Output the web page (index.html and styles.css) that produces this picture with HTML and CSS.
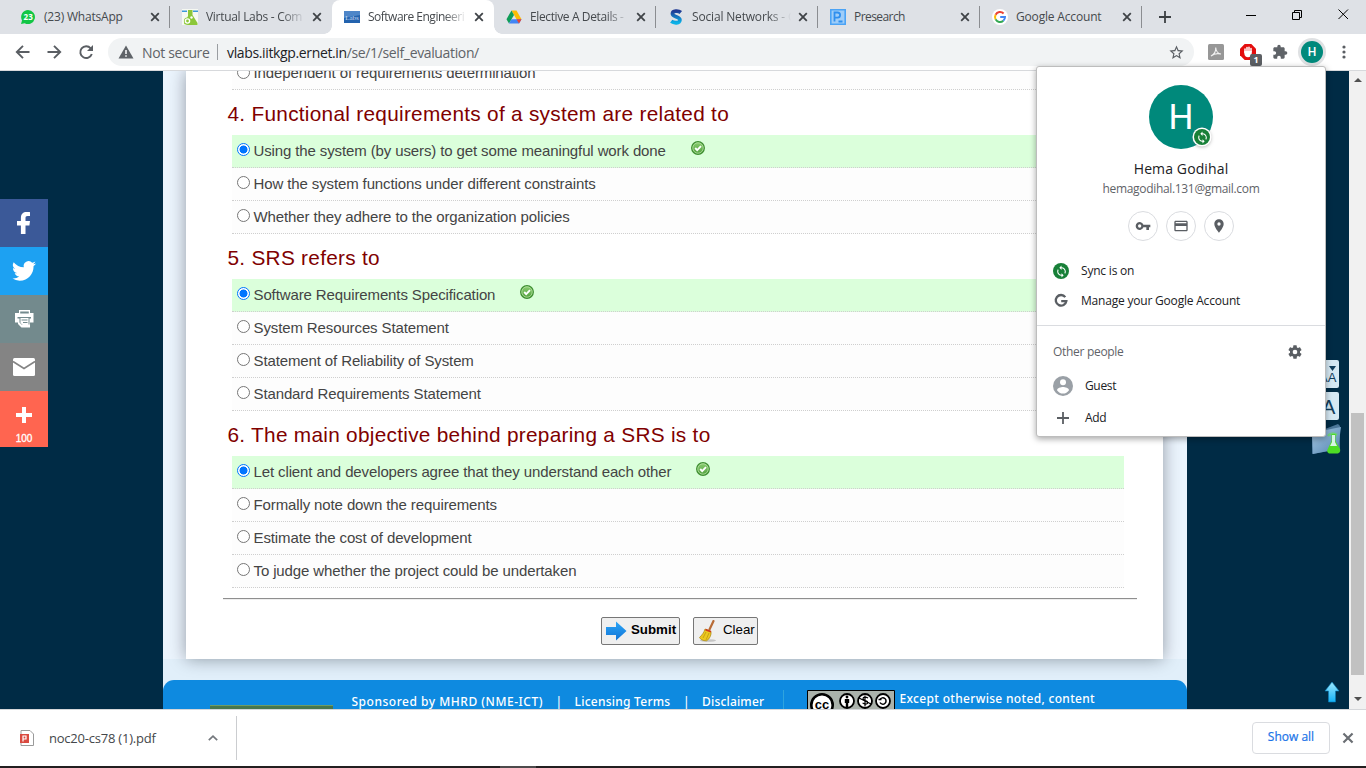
FILE: index.html
```html
<!DOCTYPE html>
<html lang="en">
<head>
<meta charset="utf-8">
<title>Software Engineering Virtual Lab</title>
<link rel="stylesheet" href="styles.css">
</head>
<body>
<svg class="defs" width="0" height="0">
  <defs>
    <linearGradient id="tick-g" x1="0" y1="0" x2="0" y2="1"><stop offset="0" stop-color="#8ccf72"/><stop offset="1" stop-color="#4f9e3c"/></linearGradient>
    <linearGradient id="arrow-g" x1="0" y1="0" x2="0" y2="1"><stop offset="0" stop-color="#2ba6f7"/><stop offset="1" stop-color="#1173d6"/></linearGradient>
    <linearGradient id="up-g" x1="0" y1="0" x2="0" y2="1"><stop offset="0" stop-color="#9fe9ff"/><stop offset="1" stop-color="#12b0f5"/></linearGradient>
    <linearGradient id="folder-g" x1="0" y1="0" x2="1" y2="1"><stop offset="0" stop-color="#a9cbe6"/><stop offset="1" stop-color="#4f81ad"/></linearGradient>
    <linearGradient id="s-g" x1="0" y1="0" x2="0" y2="1"><stop offset="0" stop-color="#203a94"/><stop offset="1" stop-color="#0bb2e8"/></linearGradient>
    <symbol id="x" viewBox="0 0 10 10"><path d="M1.200 1.200l7.600 7.600M8.800 1.200L1.200 8.800" fill="none" stroke="currentColor" stroke-width="1.800"/></symbol>
    <symbol id="sync" viewBox="0 0 24 24"><path fill="currentColor" d="M12 4V1L8 5l4 4V6c3.310 0 6 2.690 6 6 0 1.010-.25 1.970-.7 2.800l1.460 1.460C19.540 15.030 20 13.570 20 12c0-4.420-3.580-8-8-8zm0 14c-3.310 0-6-2.690-6-6 0-1.010.25-1.970.7-2.800L5.240 7.740C4.460 8.970 4 10.430 4 12c0 4.420 3.580 8 8 8v3l4-4-4-4v3z"/></symbol>
    <symbol id="tick" viewBox="0 0 14 14"><circle cx="7" cy="7" r="6.300" fill="url(#tick-g)" stroke="#3f8f32" stroke-width="1.300"/><circle cx="7" cy="7" r="5.200" fill="none" stroke="#b4dfa2" stroke-width=".8"/><path d="M4.200 7l2 2.100 3.800-4" fill="none" stroke="#fff" stroke-width="1.900"/></symbol>
    <symbol id="plus" viewBox="0 0 12 12"><path d="M6 0v12M0 6h12" fill="none" stroke="currentColor" stroke-width="1.800"/></symbol>
  </defs>
</svg>

<div class="tabs">
  <div class="tab">
    <svg class="fav" viewBox="0 0 16 16"><path d="M8 1a7 7 0 1 1-3.300 13.200L1 15l1-3.600A7 7 0 0 1 8 1z" fill="#12c645"/><text x="8.200" y="11" text-anchor="middle" class="fav-count">23</text></svg>
    <span class="title t1">(23) WhatsApp</span><svg class="close"><use href="#x"/></svg>
  </div>
  <div class="tab">
    <svg class="fav" viewBox="0 0 16 16"><path d="M0 0h16v16H0z" fill="#f6f9f2"/><path d="M0 2.200h5M11 2.200h5" stroke="#3b9ad9" stroke-width="1.500"/><path d="M6 1h4.500v5l5 8v2H6l-4-1 4-8z" fill="#8cc739"/><circle cx="5.500" cy="12" r="3.600" fill="#8cc739"/><circle cx="5.500" cy="12" r="2.100" fill="none" stroke="#fff" stroke-width="1.400"/><circle cx="9.500" cy="8.500" r="1.200" fill="#fff"/></svg>
    <span class="title t2 fade">Virtual Labs - Com</span><svg class="close"><use href="#x"/></svg>
  </div>
  <div class="tab active">
    <svg class="fav" viewBox="0 0 16 16"><path d="M0 2h16v12H0z" fill="#2363ae"/><path d="M0 2h16v4L0 9z" fill="#4e86c8"/><text x="8" y="10.500" text-anchor="middle" class="fav-labs">Labs</text></svg>
    <span class="title t3 fade">Software Engineeri</span><svg class="close"><use href="#x"/></svg>
  </div>
  <div class="tab after">
    <svg class="fav" viewBox="0 0 16 16"><path d="M5.500 1.500h5l5 8.800h-5z" fill="#fbbc04"/><path d="M5.500 1.500L8 6 3 14.500.5 10.200z" fill="#0f9d58"/><path d="M5.400 10.300h10.100L13 14.500H3z" fill="#4285f4"/><path d="M10.500 10.300h5L13 14.500z" fill="#ea4335"/></svg>
    <span class="title t4 fade">Elective A Details -</span><svg class="close"><use href="#x"/></svg>
  </div>
  <div class="tab">
    <svg class="fav" viewBox="0 0 16 16"><path d="M12.800 3.500C10.500 1.500 4.300 1.300 4.500 5 4.700 8 12 7.500 11.900 11 11.700 14.600 6 14.300 3.200 12.300" fill="none" stroke="url(#s-g)" stroke-width="3.800"/></svg>
    <span class="title t5 fade">Social Networks - C</span><svg class="close"><use href="#x"/></svg>
  </div>
  <div class="tab">
    <svg class="fav" viewBox="0 0 16 16"><path d="M.8.8h14.400v14.400H.8z" fill="#9fcdf8" stroke="#4ba3f5" stroke-width="1.600"/><path d="M4.500 12.500v-9h3a2.500 2.500 0 0 1 0 5.200h-3M8.500 12.500h4" fill="none" stroke="#2f8fee" stroke-width="1.800"/></svg>
    <span class="title t6">Presearch</span><svg class="close"><use href="#x"/></svg>
  </div>
  <div class="tab">
    <svg class="fav" viewBox="0 0 16 16"><circle cx="8" cy="8" r="8" fill="#fff"/><path d="M11.600 4.500A5 5 0 0 0 3.600 5.700" fill="none" stroke="#ea4335" stroke-width="2"/><path d="M3.600 5.700a5 5 0 0 0 0 4.700" fill="none" stroke="#fbbc05" stroke-width="2"/><path d="M3.600 10.400a5 5 0 0 0 7.700 1.400" fill="none" stroke="#34a853" stroke-width="2"/><path d="M11.300 11.800A5 5 0 0 0 13 8.100H8.200" fill="none" stroke="#4285f4" stroke-width="2"/></svg>
    <span class="title t7">Google Account</span><svg class="close"><use href="#x"/></svg>
  </div>
  <svg class="newtab"><use href="#plus"/></svg>
  <svg class="wincontrols" viewBox="0 0 110 12"><path d="M1 7.500h10" stroke="#000"/><path d="M47.500 4.500h7v7h-7zM49.500 4.500v-2h7v7h-2M93.500 1.500l9.500 9.500M103 1.500L93.500 11" fill="none" stroke="#000"/></svg>
</div>

<div class="toolbar">
  <svg class="nav" viewBox="0 0 80 16"><g fill="none" stroke="#5a5e63" stroke-width="1.900"><path d="M14.500 8H2M8 1.800L1.800 8 8 14.200M32.500 8H45M39 1.800L45.200 8 39 14.200"/><path d="M76.800 10A5.900 5.900 0 1 1 75.700 4.300"/></g><path d="M78 1v6h-6z" fill="#5a5e63"/></svg>
  <div class="omnibox">
    <svg class="warn" viewBox="0 0 16 14"><path d="M8 .5L15.500 13.500H.5z" fill="#5f6368"/><path d="M8 5v4M8 10.200v1.600" stroke="#fff" stroke-width="1.500"/></svg>
    <span class="notsecure">Not secure</span><i class="bar"></i>
    <span class="url"><b>vlabs.iitkgp.ernet.in</b>/se/1/self_evaluation/</span>
    <svg class="star" viewBox="0 0 24 24"><path fill="#5a5e63" d="M22 9.240l-7.190-.62L12 2 9.190 8.630 2 9.240l5.460 4.730L5.820 21 12 17.270 18.180 21l-1.630-7.030L22 9.240zM12 15.400l-3.760 2.270 1-4.280-3.320-2.880 4.380-.38L12 6.100l1.710 4.040 4.380.38-3.320 2.880 1 4.280L12 15.400z"/></svg>
  </div>
  <svg class="ext pdf" viewBox="0 0 16 16"><rect width="16" height="16" rx="1.500" fill="#979797"/><path d="M3 12c3-1.500 5-5 4.700-8.500C8 7 9.500 9.500 13 10 9 9 5.500 10 3 12z" fill="none" stroke="#f2f2f2" stroke-width="1.100"/></svg>
  <div class="ext block">
    <svg viewBox="0 0 16 16"><path d="M4.700 0h6.600L16 4.700v6.600L11.300 16H4.700L0 11.300V4.700z" fill="#e40d0d"/><path d="M5 8.500V5M7 8V3.500M9 8V3.200M11 8V4.500" fill="none" stroke="#fff" stroke-width="1.500" stroke-linecap="round"/><path d="M4.300 7h7.400v2.500C11.500 12 10 13.300 8 13.300S4.300 12 4.300 9z" fill="#fff"/></svg>
    <span class="badge">1</span>
  </div>
  <svg class="ext puzzle" viewBox="0 0 24 24"><path fill="#5f6368" d="M20.500 11H19V7c0-1.100-.9-2-2-2h-4V3.500a2.500 2.500 0 0 0-5 0V5H4c-1.100 0-2 .9-2 2v3.800h1.500c1.500 0 2.700 1.200 2.700 2.700S5 16.200 3.500 16.200H2V20c0 1.100.9 2 2 2h3.800v-1.500c0-1.500 1.200-2.700 2.700-2.700s2.700 1.200 2.700 2.700V22H17c1.100 0 2-.9 2-2v-4h1.500a2.500 2.500 0 0 0 0-5z"/></svg>
  <span class="me">H</span>
  <svg class="dots" viewBox="0 0 4 14"><g fill="#5a5e63"><circle cx="2" cy="2" r="1.600"/><circle cx="2" cy="7" r="1.600"/><circle cx="2" cy="12" r="1.600"/></g></svg>
</div>

<div class="viewport">
  <nav class="share">
    <a class="fb"><svg viewBox="0 0 32 32"><path fill="#fff" d="M22 5.160c-.4-.05-1.800-.16-3.400-.16-3.400 0-5.700 2-5.700 5.900v3.200H9v4.500h3.900V27h4.600v-8.400h3.900l.6-4.500h-4.500v-2.800c0-1.300.4-2.200 2.200-2.200H22z"/></svg></a>
    <a class="tw"><svg viewBox="0 0 32 32"><path fill="#fff" d="M28 8.560a9.900 9.900 0 0 1-2.830.78 4.900 4.900 0 0 0 2.170-2.720 9.900 9.900 0 0 1-3.130 1.190 4.920 4.920 0 0 0-8.400 4.490A13.980 13.980 0 0 1 5.670 7.150a4.930 4.930 0 0 0 1.520 6.570 4.900 4.900 0 0 1-2.230-.61v.06c0 2.390 1.700 4.380 3.950 4.830a4.900 4.900 0 0 1-2.220.08 4.930 4.930 0 0 0 4.600 3.420A9.900 9.900 0 0 1 4.500 23.540 13.940 13.940 0 0 0 11.550 25.760c9.050 0 14-7.500 14-14v-.64A10 10 0 0 0 28 8.560z"/></svg></a>
    <a class="pr"><svg viewBox="0 0 32 32"><path fill="#fff" d="M11 7h11v3h3.500v9.500H22V24.500h-8.500L10 21v-1.500H7V10h4z"/><path fill="#738a8d" d="M12.200 8.400h8.600v2h-8.600zM9.500 14h13.500v1.400h-1.500v6h-8l-2-2v-4h-2z"/><path fill="#fff" d="M12.500 15h8v7.500h-5L12.500 20z"/><path d="M13.500 17h6M15 19.500h4.500" stroke="#738a8d" stroke-width="1.100"/></svg></a>
    <a class="em"><svg viewBox="0 0 32 32"><rect x="5" y="7" width="22" height="18" rx="1.500" fill="#fff"/><path d="M5 10.500l11 7L27 10.500" fill="none" stroke="#848484" stroke-width="1.600"/></svg></a>
    <a class="more"><svg viewBox="0 0 32 32"><path d="M16 8v16M8 16h16" stroke="#fff" stroke-width="4"/></svg><span>100</span></a>
  </nav>

  <main class="page">
    <div class="body"><section class="card">
      <div class="opt first"><i class="radio"></i><span class="o0">Independent of requirements determination</span></div>
      <h2 class="h4q">4. Functional requirements of a system are related to</h2>
      <div class="opt right"><i class="radio on"></i><span>Using the system (by users) to get some meaningful work done</span><svg class="tick"><use href="#tick"/></svg></div>
      <div class="opt"><i class="radio"></i><span>How the system functions under different constraints</span></div>
      <div class="opt"><i class="radio"></i><span>Whether they adhere to the organization policies</span></div>
      <h2 class="h5q">5. SRS refers to</h2>
      <div class="opt right"><i class="radio on"></i><span>Software Requirements Specification</span><svg class="tick"><use href="#tick"/></svg></div>
      <div class="opt"><i class="radio"></i><span>System Resources Statement</span></div>
      <div class="opt"><i class="radio"></i><span>Statement of Reliability of System</span></div>
      <div class="opt"><i class="radio"></i><span>Standard Requirements Statement</span></div>
      <h2 class="h6q">6. The main objective behind preparing a SRS is to</h2>
      <div class="opt right"><i class="radio on"></i><span>Let client and developers agree that they understand each other</span><svg class="tick"><use href="#tick"/></svg></div>
      <div class="opt"><i class="radio"></i><span>Formally note down the requirements</span></div>
      <div class="opt"><i class="radio"></i><span>Estimate the cost of development</span></div>
      <div class="opt"><i class="radio"></i><span>To judge whether the project could be undertaken</span></div>
      <div class="rule"></div>
      <div class="actions">
        <div class="btn submit"><svg viewBox="0 0 22 22"><path d="M1 7h10V1.500L21.500 11 11 20.500V15H1z" fill="url(#arrow-g)"/></svg><b>Submit</b></div>
        <div class="btn clear"><svg viewBox="0 0 22 22"><ellipse cx="11" cy="20.500" rx="8" ry="1.300" fill="#c4c4c4"/><path d="M16.500 1L12.500 9.500" stroke="#b86b35" stroke-width="2.200" stroke-linecap="round"/><path d="M8 9l6 2.500c.5 3-1 7.500-4.500 9.300C6 21 3 19 2.500 17.500 5 15 7 12.500 8 9z" fill="#ecc81e" stroke="#a88512" stroke-width=".7"/><path d="M8.500 9.600l5.500 2.200" stroke="#cf3a1c" stroke-width="1.700"/><path d="M9 12l-3 6M12 13l-3 7" stroke="#b9920c" stroke-width=".7"/></svg><span>Clear</span></div>
      </div>
    </section></div>
    <footer>
      <div class="green"></div>
      <div class="links"><span class="f1">Sponsored by MHRD (NME-ICT)</span><span>|</span><span class="f2">Licensing Terms</span><span>|</span><span class="f3">Disclaimer</span></div>
      <div class="license">
        <svg width="88" height="31" viewBox="0 0 88 31"><path d="M.5.500h87v30H.5z" fill="#aab2ab" stroke="#000"/><circle cx="15" cy="15" r="10.700" fill="#fff" stroke="#000" stroke-width="2.600"/><text x="15" y="18.500" text-anchor="middle" class="cc">cc</text><g fill="#fff" stroke="#000" stroke-width="1.800"><circle cx="40" cy="11" r="7"/><circle cx="58" cy="11" r="7"/><circle cx="76" cy="11" r="7"/></g><circle cx="40" cy="7" r="1.400"/><path d="M37.800 9h4.400v4h-1v4h-2.400v-4h-1z"/><path d="M61 8.200c-1.500-1.500-5-1.500-5 .4 0 2.500 4.800 1.500 4.800 4 0 2-3.500 2-5.200.3M58 5.500v11M52 8l12 6" fill="none" stroke="#000" stroke-width="1.200"/><path d="M73 9.500a3.200 3.200 0 1 1 0 3M71.500 9.500h3" fill="none" stroke="#000" stroke-width="1.500"/></svg>
        <span class="f4">Except otherwise noted, content</span>
      </div>
    </footer>
  </main>

  <div class="tools">
    <svg width="28" height="28" viewBox="0 0 28 28"><rect width="28" height="28" rx="2" fill="#d5e8f3"/><path d="M18 6h7l-3.500 5z" fill="#123e5c"/><text x="8" y="22" class="aa">AA</text></svg>
    <svg width="28" height="28" viewBox="0 0 28 28"><rect width="28" height="28" rx="2" fill="#d5e8f3"/><text x="11" y="22" class="aaa">A</text></svg>
    <svg class="folder" width="32" height="32" viewBox="0 0 32 32"><path d="M2 9l13-3 13-5 2 2v23L2 31z" fill="#4b7699"/><path d="M2 12l14-5 15-3-3 22L3 31z" fill="url(#folder-g)"/><path d="M18 13c2-3 6-3 9-1" fill="none" stroke="#5ff23b" stroke-width="2.500" opacity=".55"/><path d="M21.500 11h4v7l4.500 8c.8 3-1 4.500-3 4.500h-7c-2 0-3.500-2-2.500-4l4-8.500z" fill="#4ddd25"/><path d="M22 12h3v7l2 4h-7l2-4z" fill="#d6f5e3"/></svg>
  </div>
  <svg class="totop" viewBox="0 0 16 22"><path d="M8 1l7 9h-3.500v11h-7V10H1z" fill="url(#up-g)" stroke="#087db8" stroke-width=".6"/></svg>
  <div class="scroll"><svg viewBox="0 0 8 4"><path d="M0 4l4-4 4 4z" fill="#505050"/></svg><i></i><svg viewBox="0 0 8 4"><path d="M0 0h8L4 4z" fill="#505050"/></svg></div>
</div>

<div class="downloads">
  <svg class="pdficon" viewBox="0 0 14 16"><path d="M1 .5h9l3.500 3.500v11.500H1z" fill="#fff" stroke="#9a9a9a"/><rect y="4" width="9" height="9" fill="#d94a40"/><path d="M3 11.500V6h3v3H3" fill="none" stroke="#fff" stroke-width="1.200"/></svg>
  <span class="fname">noc20-cs78 (1).pdf</span>
  <svg class="chev" viewBox="0 0 10 6"><path d="M.8 5.200L5 1.200l4.200 4" fill="none" stroke="#74787d" stroke-width="1.700"/></svg>
  <i class="sep"></i>
  <span class="showall"><span>Show all</span></span>
  <svg class="dclose"><use href="#x"/></svg>
</div>
<div class="taskbar"><i></i></div>

<aside class="popup">
  <div class="avatar">H<span class="sync"><svg><use href="#sync"/></svg></span></div>
  <div class="name"><span>Hema Godihal</span></div>
  <div class="mail"><span>hemagodihal.131@gmail.com</span></div>
  <div class="chips">
    <span><svg viewBox="0 0 24 24"><path fill="#5a5e63" d="M12.650 10A6 6 0 1 0 12.650 14H17v4h4v-4h2v-4H12.650zM7 14.500a2.500 2.500 0 1 1 0-5 2.500 2.500 0 0 1 0 5z"/></svg></span>
    <span><svg viewBox="0 0 24 24"><path fill="#5a5e63" d="M20 4H4c-1.110 0-2 .89-2 2v12c0 1.110.89 2 2 2h16c1.110 0 2-.89 2-2V6c0-1.110-.89-2-2-2zm0 14H4v-6h16v6zm0-10H4V6h16v2z"/></svg></span>
    <span><svg viewBox="0 0 24 24"><path fill="#5a5e63" d="M12 2C8.130 2 5 5.130 5 9c0 5.250 7 13 7 13s7-7.750 7-13c0-3.870-3.130-7-7-7zm0 9.500a2.500 2.500 0 1 1 0-5 2.500 2.500 0 0 1 0 5z"/></svg></span>
  </div>
  <div class="row"><span class="sync big"><svg><use href="#sync"/></svg></span><span class="p1">Sync is on</span></div>
  <div class="row"><svg class="g" viewBox="0 0 16 16"><path d="M12.300 4.100A5.300 5.300 0 1 0 13.300 8.200H8.200" fill="none" stroke="#5a5e63" stroke-width="2.300"/></svg><span class="p2">Manage your Google Account</span></div>
  <div class="others"><span class="p3">Other people</span><svg viewBox="0 0 24 24"><path fill="#5a5e63" d="M19.430 12.980c.04-.32.07-.64.07-.98s-.03-.66-.07-.98l2.110-1.650c.19-.15.24-.42.12-.64l-2-3.460c-.12-.22-.39-.3-.61-.22l-2.490 1c-.52-.4-1.080-.73-1.690-.98l-.38-2.650A.488.488 0 0 0 14 2h-4c-.25 0-.46.18-.49.42l-.38 2.650c-.61.25-1.170.59-1.690.98l-2.490-1c-.23-.09-.49 0-.61.22l-2 3.460c-.13.22-.07.49.12.64l2.110 1.650c-.04.32-.07.65-.07.98s.03.66.07.98l-2.110 1.650c-.19.15-.24.42-.12.64l2 3.460c.12.220.39.300.61.220l2.490-1c.52.400 1.080.730 1.690.980l.38 2.650c.03.240.24.420.49.420h4c.25 0 .46-.18.49-.42l.38-2.650c.61-.25 1.170-.59 1.690-.98l2.490 1c.23.090.49 0 .61-.22l2-3.460c.12-.22.07-.49-.12-.64l-2.110-1.650zM12 15.500A3.500 3.500 0 1 1 12 8.500a3.500 3.500 0 0 1 0 7z"/></svg></div>
  <div class="row person"><svg class="guest" viewBox="0 0 20 20"><circle cx="10" cy="10" r="10" fill="#9aa0a6"/><circle cx="10" cy="6.300" r="3" fill="#fff"/><path d="M4 14.300c0-2.200 4-3.300 6-3.300s6 1.100 6 3.300a7.200 7.200 0 0 1-12 0z" fill="#fff"/></svg><span>Guest</span></div>
  <div class="row person add"><svg class="addi"><use href="#plus"/></svg><span>Add</span></div>
</aside>
</body>
</html>
```
FILE: styles.css
```css
* { box-sizing: border-box; }
body { margin: 0; width: 1366px; height: 768px; overflow: hidden; display: flex; flex-direction: column; position: relative; font-family: "Open Sans", "Noto Sans", sans-serif; font-size: 12px; background: #fff; color: #202124; }
svg { display: block; flex: none; }
span { white-space: nowrap; }
.defs { position: absolute; }

.tabs { height: 34px; background: #dee1e6; display: flex; padding-left: 8px; flex: none; }
.tab { width: 162px; height: 34px; display: flex; align-items: center; padding-left: 12px; position: relative; border-right: 1px solid transparent; border-image: linear-gradient(transparent 7px, #8b8d91 7px, #8b8d91 27px, transparent 27px) 1; }
.tab:nth-child(2), .tab.active { border-image: none; }
.tab.active { background: #fff; border-radius: 8px 8px 0 0; }
.tab.active::before, .tab.active::after { content: ""; position: absolute; bottom: 0; width: 8px; height: 8px; }
.tab.active::before { left: -8px; background: radial-gradient(circle at 0 0, transparent 7.500px, #fff 8px); }
.tab.active::after { right: -9px; background: radial-gradient(circle at 100% 0, transparent 7.500px, #fff 8px); }
.fav { width: 16px; height: 16px; }
.fav-count { font: bold 8px "Open Sans", sans-serif; fill: #fff; }
.fav-labs { font: 7px "Liberation Serif", serif; fill: #c3d8f2; }
.title { width: 99px; margin-left: 8px; color: #45494d; line-height: 18px; letter-spacing: -.2px; }
.t2 { letter-spacing: -.3px; }
.t3 { letter-spacing: -.5px; }
.t4 { letter-spacing: -.38px; }
.t5, .t7 { letter-spacing: -.17px; }
.t6 { letter-spacing: -.57px; }
.fade { -webkit-mask-image: linear-gradient(90deg, #000 76px, transparent 99px); mask-image: linear-gradient(90deg, #000 76px, transparent 99px); }
.close { width: 10px; height: 10px; margin-left: 7px; color: #3f4347; }
.newtab { width: 12px; height: 12px; margin: 11px 0 0 17px; color: #3c4043; }
.wincontrols { width: 110px; height: 12px; margin: 8px 0 0 74px; }

.toolbar { height: 37px; border-bottom: 1px solid #d7d9dc; display: flex; align-items: center; flex: none; }
.nav { width: 80px; height: 16px; margin-left: 14.500px; }
.omnibox { margin-left: 13.500px; width: 1086px; height: 28px; border-radius: 14px; background: #f1f3f4; display: flex; align-items: center; padding-left: 10px; font-size: 14px; color: #5f6368; }
.warn { width: 16px; height: 14px; }
.notsecure { margin-left: 8px; width: 67px; letter-spacing: -.35px; }
.bar { width: 1px; height: 16px; background: #9a9da1; margin: 0 9px 0 8px; }
.url { flex: 1; letter-spacing: -.36px; }
.url b { font-weight: 400; color: #202124; }
.star { width: 17px; height: 17px; margin-right: 9px; }
.ext { width: 16px; height: 16px; margin-left: 14px; }
.block { margin-left: 16px; position: relative; }
.block svg { width: 16px; height: 16px; }
.badge { position: absolute; left: 10px; top: 10px; width: 12px; height: 12px; border-radius: 2px; background: #5c5f63; color: #fff; font: bold 9px/12px "Open Sans", sans-serif; text-align: center; }
.puzzle { margin-left: 16px; }
.me { width: 22px; height: 22px; border-radius: 50%; background: #00897b; box-shadow: 0 0 0 3px #dfe1e3; color: #fff; font: 500 12px/22px Roboto, sans-serif; text-align: center; margin-left: 13px; }
.dots { width: 4px; height: 14px; margin-left: 19px; }

.viewport { height: 638px; background: #002b45; position: relative; flex: none; overflow: hidden; display: flex; }
.share { width: 48px; margin-top: 128px; height: 248px; }
.share a { display: flex; flex-direction: column; align-items: center; justify-content: center; height: 48px; }
.share svg { width: 32px; height: 32px; }
.fb { background: #3b5998; } .tw { background: #1da1f2; } .pr { background: #738a8d; } .em { background: #848484; }
.share .more { background: #ff6550; height: 56px; color: #fff; font: 10px/12px "Liberation Sans", Arial, sans-serif; -webkit-text-stroke: .3px #fff; padding-top: 6px; }
.more span { margin-top: 2px; }
.page { width: 1024px; margin-left: 115px; background: #e1effa; display: flex; flex-direction: column; }
.body { height: 588px; background: #ebf4fd; padding: 0 24px 0 23px; flex: none; }
.card { height: 588px; background: #fff; box-shadow: 0 0 16px rgba(0, 10, 20, .38); padding: 0 39px 0 46px; position: relative; clip-path: inset(0 -30px -30px -30px); color: #444; font-family: "Liberation Sans", Arial, sans-serif; }
.card h2 { margin: 0 0 0 -4.500px; height: 45px; padding-top: 12px; font-size: 20.800px; line-height: 24px; font-weight: 400; color: #800000; letter-spacing: .28px; white-space: nowrap; }
.opt { height: 33px; display: flex; padding-left: 5px; font-size: 15px; line-height: 32px; letter-spacing: -.118px; border-bottom: 1px dotted #cfcfcf; background: #fdfdfd; }
.opt.first { height: 19px; line-height: 4px; }
.first .radio { margin-top: -5px; }
.opt.right { background: #dbffdb; }
.radio { width: 13px; height: 13px; margin: 8px 3.500px 0 0; border: 1px solid #767676; border-radius: 50%; background: #fff; flex: none; }
.radio.on { border-color: #0075ff; background: radial-gradient(circle, #0075ff 3.700px, #fff 4.300px); }
.tick { width: 14px; height: 14px; margin: 6px 0 0 25px; }
.rule { margin: 10px -13px 0 -9px; height: 2px; border-top: 1px solid #8f8f8f; background: #eee; }
.actions { display: flex; gap: 13px; margin: 17px 0 0 369px; color: #000; font-size: 13.300px; }
.btn { height: 28px; border: 1px solid #767676; border-radius: 2px; background: #efefef; display: flex; align-items: center; }
.btn svg { width: 22px; height: 22px; margin: 0 4px 0 3px; }
.btn b, .btn span { margin-top: -3px; }
.submit { width: 79px; } .clear { width: 65px; }
footer { margin-top: 21px; height: 29px; background: #0e8ae0; border-radius: 11px 11px 0 0; display: flex; color: #fff; font: 12px/15px "Noto Sans", sans-serif; flex: none; overflow: hidden; }
footer span { font-weight: 500; }
.green { width: 123px; height: 10px; margin: 25px 0 0 47px; background: #47764f; border-top: 1px solid #6f9c63; }
.links { display: flex; margin: 14px 0 0 18.500px; width: 431.500px; gap: 12.500px; }
.f1 { letter-spacing: .52px; }
.f2 { letter-spacing: .24px; }
.f3 { letter-spacing: .18px; }
.f4 { letter-spacing: .32px; }
.license { display: flex; margin-top: 10px; border-left: 1px solid #2fa4de; padding-left: 23px; height: 19px; }
.license .f4 { margin: 1px 0 0 4.500px; }
.cc { font: bold 13px "Liberation Sans", sans-serif; }
.tools { margin: 289px 0 0 124px; width: 30px; display: flex; flex-direction: column; gap: 4px; }
.tools .folder { margin: -1px 0 0 -1.500px; }
.aa { font: 13px "Liberation Sans", sans-serif; fill: #123e5c; }
.aaa { font: 20px "Liberation Sans", sans-serif; fill: #123e5c; }
.totop { width: 16px; height: 22px; margin: 610px 0 0 -17px; }
.scroll { width: 17px; margin-left: auto; background: #f1f1f1; position: relative; display: flex; flex-direction: column; align-items: center; }
.scroll svg { width: 8px; height: 4px; margin-top: 7px; }
.scroll i { width: 13px; height: 262px; background: #c1c1c1; margin: 331px 0 15px; }

.downloads { height: 57px; border-top: 1px solid #d5d7da; display: flex; align-items: center; flex: none; font-size: 13px; }
.pdficon { width: 14px; height: 16px; margin-left: 20px; }
.fname { margin-left: 15px; width: 159px; color: #44474a; letter-spacing: -.22px; }
.chev { width: 10px; height: 6px; }
.sep { width: 1px; height: 44px; background: #cbcdd0; margin-left: 18px; }
.showall { width: 78px; height: 32px; margin-left: auto; border: 1px solid #dadce0; border-radius: 4px; color: #1a73e8; font-size: 12px; line-height: 28px; text-align: center; -webkit-text-stroke: .2px #1a73e8; }
.dclose { width: 12px; height: 12px; color: #6a6e73; margin: 0 12px; }
.taskbar { height: 2px; background: #231f20; flex: none; }
.taskbar i { display: block; width: 36px; height: 2px; margin-left: 500px; background: #4d4b4c; }

.popup { position: absolute; left: 1036px; top: 66px; width: 290px; height: 371px; background: #fff; border: 1px solid #bdbdbd; border-radius: 3px; box-shadow: 0 2px 6px rgba(0, 0, 0, .35); }
.avatar { width: 64px; height: 64px; margin: 18px auto 0; background: #00897b; color: #fff; border-radius: 50%; font: 35px/66px Roboto, sans-serif; text-align: center; position: relative; }
.sync { width: 16px; height: 16px; border-radius: 50%; background: #188038; color: #fff; display: flex; align-items: center; justify-content: center; flex: none; }
.sync svg { width: 13px; height: 13px; }
.avatar .sync { position: absolute; left: 45px; top: 44px; box-shadow: 0 0 0 1.500px #fff, 0 1px 4px #777; }
.name { font-size: 14px; line-height: 20px; margin-top: 10px; text-align: center; letter-spacing: .12px; }
.mail { font-size: 12px; line-height: 18px; margin-top: 1px; color: #5f6368; text-align: center; letter-spacing: -.33px; }
.chips { display: flex; justify-content: center; gap: 8px; margin-top: 13px; }
.chips span { width: 30px; height: 30px; border: 1px solid #dadce0; border-radius: 50%; display: flex; align-items: center; justify-content: center; }
.chips svg { width: 16px; height: 16px; }
.row { display: flex; align-items: center; height: 30px; padding-left: 16px; letter-spacing: -.2px; }
.chips + .row { margin-top: 15px; }
.row > span:last-child { margin: -1px 0 0 12px; }
.g { width: 16px; height: 16px; }
.others { margin-top: 9px; border-top: 1px solid #dadce0; height: 45px; padding: 7px 22px 0 16px; display: flex; align-items: center; justify-content: space-between; color: #5f6368; letter-spacing: -.3px; }
.others svg { width: 16px; height: 16px; }
.person { height: 32px; letter-spacing: -.35px; }
.guest { width: 20px; height: 20px; }
.addi { width: 12px; height: 12px; margin: 0 4px; color: #5a5e63; }
```
